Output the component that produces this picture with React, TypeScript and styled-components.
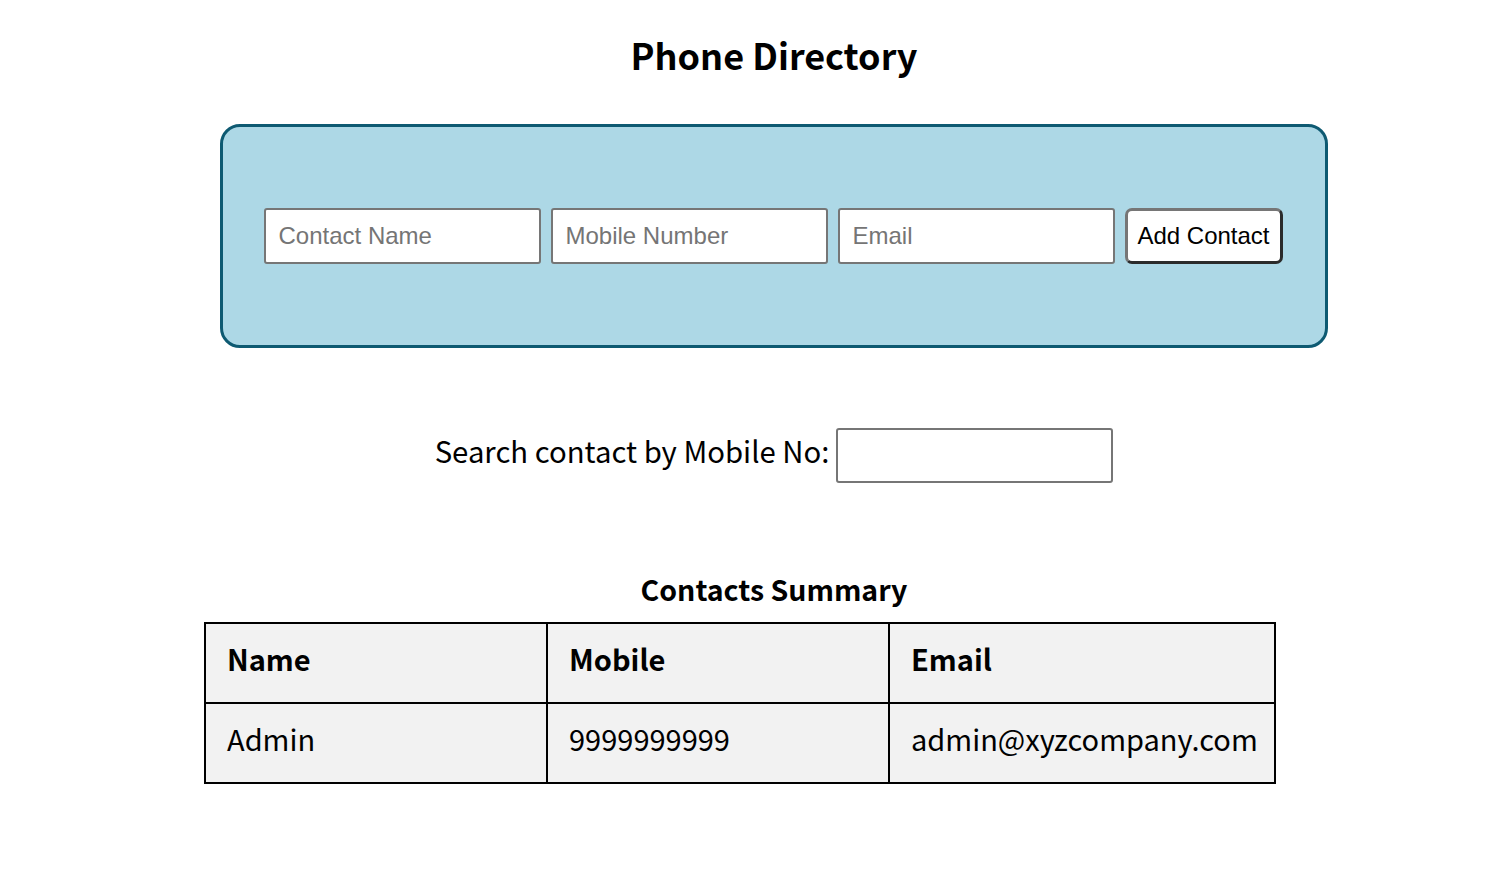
import React from "react";
import styled, { createGlobalStyle } from "styled-components";

const Global = createGlobalStyle`
  html, body { margin: 0; padding: 0; background: #ffffff; }
  body { font-family: "Noto Sans CJK KR", "Noto Sans", sans-serif; color: #000; }
`;

const Page = styled.div`
  padding: 0 8px 40px 50px;
  display: flex;
  flex-direction: column;
`;

const Title = styled.h1`
  margin: 28px 0 0;
  text-align: center;
  font-size: 36px;
  line-height: 52px;
  font-weight: 700;
`;

const Panel = styled.section`
  box-sizing: border-box;
  width: 1108px;
  height: 224px;
  margin: 44px auto 0;
  padding-right: 2px;
  background: #add8e6;
  border: 3px solid #0e5a72;
  border-radius: 20px;
  display: flex;
  align-items: center;
  justify-content: center;
  gap: 10px;
`;

const Field = styled.input`
  box-sizing: border-box;
  width: 277px;
  height: 56px;
  padding: 0 13px;
  border: 2px solid #767676;
  border-radius: 3px;
  background: #fff;
  font-family: "Liberation Sans", Arial, sans-serif;
  font-size: 24px;
  color: #000;
  &::placeholder { color: #757575; }
`;

const AddButton = styled.button`
  box-sizing: border-box;
  width: 158px;
  height: 56px;
  padding: 0;
  background: #fff;
  border: 3px solid;
  border-color: #767676 #2b2b2b #2b2b2b #767676;
  border-radius: 7px;
  font-family: "Liberation Sans", Arial, sans-serif;
  font-size: 24px;
  color: #000;
`;

const SearchRow = styled.div`
  margin-top: 80px;
  display: flex;
  align-items: center;
  justify-content: center;
  gap: 7px;
`;

const SearchLabel = styled.label`
  font-size: 29.3px;
  padding-bottom: 12px;
`;

const SearchInput = styled(Field)`
  height: 55px;
`;

const Summary = styled.h2`
  margin: 88px 0 0;
  text-align: center;
  font-size: 28.5px;
  line-height: 36px;
  font-weight: 700;
`;

const Table = styled.table`
  margin: 15px 0 0 154px;
  width: 1070px;
  table-layout: fixed;
  border-collapse: collapse;
  background: #f2f2f2;
`;

const Col = styled.col<{ $w: number }>`
  width: ${(p) => p.$w}px;
`;

const Cell = styled.td<{ $head?: boolean }>`
  box-sizing: border-box;
  height: 80px;
  padding: 0 21px 10px;
  border: 2px solid #000;
  text-align: left;
  white-space: nowrap;
  font-size: 29px;
  font-weight: ${(p) => (p.$head ? 700 : 400)};
`;

export default function App() {
  return (
    <Page>
      <Global />
      <Title>Phone Directory</Title>
      <Panel>
        <Field placeholder="Contact Name" />
        <Field placeholder="Mobile Number" />
        <Field placeholder="Email" />
        <AddButton>Add Contact</AddButton>
      </Panel>
      <SearchRow>
        <SearchLabel>Search contact by Mobile No:</SearchLabel>
        <SearchInput />
      </SearchRow>
      <Summary>Contacts Summary</Summary>
      <Table>
        <colgroup>
          <Col $w={342} />
          <Col $w={342} />
          <Col $w={386} />
        </colgroup>
        <thead>
          <tr>
            <Cell as="th" $head>Name</Cell>
            <Cell as="th" $head>Mobile</Cell>
            <Cell as="th" $head>Email</Cell>
          </tr>
        </thead>
        <tbody>
          <tr>
            <Cell>Admin</Cell>
            <Cell>9999999999</Cell>
            <Cell>admin@xyzcompany.com</Cell>
          </tr>
        </tbody>
      </Table>
    </Page>
  );
}
